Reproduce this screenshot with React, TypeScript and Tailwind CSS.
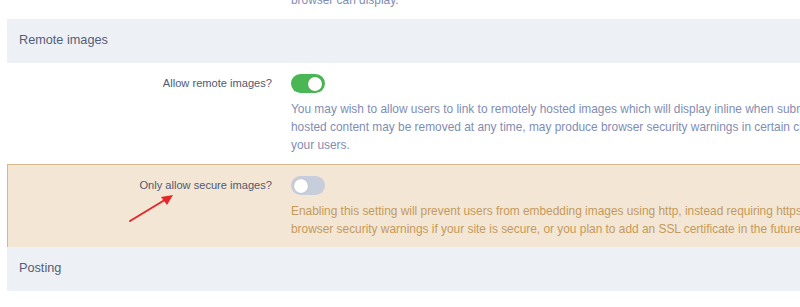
import React from 'react';

const Toggle: React.FC<{ on: boolean }> = ({ on }) => (
  <span
    className={
      'relative block h-[19px] w-[34px] rounded-full ' + (on ? 'bg-[#4bb654]' : 'bg-[#c7cddb]')
    }
  >
    <span
      className={
        'absolute top-[2.5px] h-[14px] w-[14px] rounded-full bg-white shadow-[0_0_1px_rgba(0,0,0,0.25)] ' +
        (on ? 'right-[3px]' : 'left-[3px]')
      }
    />
  </span>
);

const SectionHeader: React.FC<{ title: string }> = ({ title }) => (
  <div className="flex h-[44px] items-center bg-[#edf0f5] pl-[12px] text-[12.7px] text-[#545e78]">
    {title}
  </div>
);

interface RowProps {
  label: string;
  on: boolean;
  lines: string[];
  highlight?: boolean;
}

const OptionRow: React.FC<RowProps> = ({ label, on, lines, highlight }) => (
  <div
    className={
      'flex ' +
      (highlight
        ? 'border-l border-t border-[#d8b888] bg-[#f3e6d4] pb-[9px] pt-[11px]'
        : 'pb-[10px] pt-[11px]')
    }
  >
    <div
      className={
        'pr-[19px] pt-[1px] text-right text-[11.1px] leading-[16px] text-[#4f5a72] ' +
        (highlight ? 'w-[283px]' : 'w-[284px]')
      }
    >
      {label}
    </div>
    <div className="flex flex-col">
      <Toggle on={on} />
      <div
        className={
          'mt-[7px] text-[11.9px] leading-[18px] ' + (highlight ? 'text-[#c49a5c]' : 'text-[#7f8db3]')
        }
      >
        {lines.map(l => (
          <div key={l} className="whitespace-nowrap">
            {l}
          </div>
        ))}
      </div>
    </div>
  </div>
);

export default function App() {
  return (
    <div
      className="relative h-[307px] w-[800px] overflow-hidden bg-white"
      style={{ fontFamily: '"Liberation Sans", Arial, sans-serif' }}
    >
      <div className="ml-[7px] w-[1100px]">
        <div className="mt-[-9px] flex pb-[10px]">
          <div className="w-[284px]" />
          <div className="whitespace-nowrap text-[11.9px] leading-[18px] text-[#7f8db3]">
            browser can display.
          </div>
        </div>
        <SectionHeader title="Remote images" />
        <OptionRow
          label="Allow remote images?"
          on
          lines={[
            'You may wish to allow users to link to remotely hosted images which will display inline when submitted using BB code. However, remotely',
            'hosted content may be removed at any time, may produce browser security warnings in certain circumstances and may be a privacy concern to',
            'your users.',
          ]}
        />
        <OptionRow
          label="Only allow secure images?"
          on={false}
          highlight
          lines={[
            'Enabling this setting will prevent users from embedding images using http, instead requiring https. This may help to prevent',
            'browser security warnings if your site is secure, or you plan to add an SSL certificate in the future.',
          ]}
        />
        <SectionHeader title="Posting" />
      </div>

      <svg
        className="absolute left-[126px] top-[189px] h-[36px] w-[52px]"
        viewBox="0 0 52 36"
        fill="none"
      >
        <line x1="4" y1="32" x2="42" y2="9" stroke="#e5262b" strokeWidth="2" strokeLinecap="round" />
        <path d="M47 6 L35 8 L41 16 Z" fill="#e5262b" />
      </svg>
    </div>
  );
}
